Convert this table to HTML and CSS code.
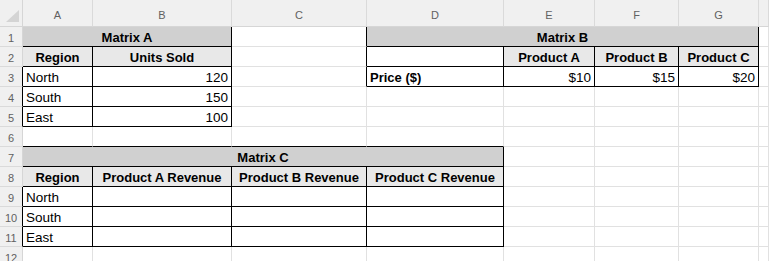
FILE: index.html
```html
<!DOCTYPE html>
<html>
<head>
<meta charset="utf-8">
<link rel="stylesheet" href="styles.css">
</head>
<body>
<div class="sheet">
  <!-- column headers -->
  <div class="c corner"><svg class="tri" width="14" height="12" viewBox="0 0 14 12"><polygon points="13,0 13,12 0,12" fill="#d4d4d4"/></svg></div>
  <div class="c hd">A</div>
  <div class="c hd">B</div>
  <div class="c hd">C</div>
  <div class="c hd">D</div>
  <div class="c hd">E</div>
  <div class="c hd">F</div>
  <div class="c hd">G</div>
  <div class="c hd"></div>

  <!-- row 1 -->
  <div class="c rh">1</div>
  <div class="c ttl span2 bR bB">Matrix A</div>
  <div class="c bR"></div>
  <div class="c ttl span4 bR bB">Matrix B</div>
  <div class="c"></div>

  <!-- row 2 -->
  <div class="c rh">2</div>
  <div class="c th bR bB">Region</div>
  <div class="c th bR bB">Units Sold</div>
  <div class="c bR"></div>
  <div class="c bR bB"></div>
  <div class="c th bR bB">Product A</div>
  <div class="c th bR bB">Product B</div>
  <div class="c th bR bB">Product C</div>
  <div class="c"></div>

  <!-- row 3 -->
  <div class="c rh bR">3</div>
  <div class="c bR bB">North</div>
  <div class="c num bR bB">120</div>
  <div class="c bR"></div>
  <div class="c b bR bB">Price ($)</div>
  <div class="c num bR bB">$10</div>
  <div class="c num bR bB">$15</div>
  <div class="c num bR bB">$20</div>
  <div class="c"></div>

  <!-- row 4 -->
  <div class="c rh bR">4</div>
  <div class="c bR bB">South</div>
  <div class="c num bR bB">150</div>
  <div class="c"></div>
  <div class="c"></div>
  <div class="c"></div>
  <div class="c"></div>
  <div class="c"></div>
  <div class="c"></div>

  <!-- row 5 -->
  <div class="c rh bR">5</div>
  <div class="c bR bB">East</div>
  <div class="c num bR bB">100</div>
  <div class="c"></div>
  <div class="c"></div>
  <div class="c"></div>
  <div class="c"></div>
  <div class="c"></div>
  <div class="c"></div>

  <!-- row 6 -->
  <div class="c rh">6</div>
  <div class="c bB"></div>
  <div class="c bB"></div>
  <div class="c bB"></div>
  <div class="c bB"></div>
  <div class="c"></div>
  <div class="c"></div>
  <div class="c"></div>
  <div class="c"></div>

  <!-- row 7 -->
  <div class="c rh">7</div>
  <div class="c ttl span4 bR bB">Matrix C</div>
  <div class="c"></div>
  <div class="c"></div>
  <div class="c"></div>
  <div class="c"></div>

  <!-- row 8 -->
  <div class="c rh">8</div>
  <div class="c th bR bB">Region</div>
  <div class="c th bR bB">Product A Revenue</div>
  <div class="c th bR bB">Product B Revenue</div>
  <div class="c th bR bB">Product C Revenue</div>
  <div class="c"></div>
  <div class="c"></div>
  <div class="c"></div>
  <div class="c"></div>

  <!-- row 9 -->
  <div class="c rh bR">9</div>
  <div class="c bR bB">North</div>
  <div class="c bR bB"></div>
  <div class="c bR bB"></div>
  <div class="c bR bB"></div>
  <div class="c"></div>
  <div class="c"></div>
  <div class="c"></div>
  <div class="c"></div>

  <!-- row 10 -->
  <div class="c rh bR">10</div>
  <div class="c bR bB">South</div>
  <div class="c bR bB"></div>
  <div class="c bR bB"></div>
  <div class="c bR bB"></div>
  <div class="c"></div>
  <div class="c"></div>
  <div class="c"></div>
  <div class="c"></div>

  <!-- row 11 -->
  <div class="c rh bR">11</div>
  <div class="c bR bB">East</div>
  <div class="c bR bB"></div>
  <div class="c bR bB"></div>
  <div class="c bR bB"></div>
  <div class="c"></div>
  <div class="c"></div>
  <div class="c"></div>
  <div class="c"></div>

  <!-- row 12 -->
  <div class="c rh">12</div>
  <div class="c"></div>
  <div class="c"></div>
  <div class="c"></div>
  <div class="c"></div>
  <div class="c"></div>
  <div class="c"></div>
  <div class="c"></div>
  <div class="c"></div>
</div>
</body>
</html>
```

FILE: styles.css
```css
html, body {
  margin: 0;
  padding: 0;
  background: #ffffff;
  overflow: hidden;
}

.sheet {
  display: grid;
  grid-template-columns: 23px 70px 139px 135px 137px 91px 84px 80px 1fr;
  grid-template-rows: 27px repeat(12, 20px);
  width: 769px;
  height: 261px;
  overflow: hidden;
  font-family: "Liberation Sans", Arial, sans-serif;
  font-size: 13.5px;
  color: #000000;
}

.c {
  box-sizing: border-box;
  border-right: 1px solid #e1e1e1;
  border-bottom: 1px solid #e1e1e1;
  display: flex;
  align-items: flex-end;
  justify-content: flex-start;
  line-height: 16px;
  padding: 0 3px;
  white-space: nowrap;
  overflow: hidden;
}

.corner {
  background: #f0f0f0;
  border-right-color: #d6d6d6;
  border-bottom-color: #d6d6d6;
  padding: 0 2px 4px 0;
  justify-content: flex-end;
}

.tri {
  display: block;
}

.hd {
  background: #f0f0f0;
  color: #616161;
  font-size: 11px;
  justify-content: center;
  padding: 0 0 3px 0;
  border-right-color: #dadada;
  border-bottom-color: #d6d6d6;
}

.rh {
  background: #f0f0f0;
  color: #616161;
  font-size: 11px;
  justify-content: center;
  padding: 0;
  border-bottom-color: #dadada;
  border-right-color: #d6d6d6;
}

.span2 {
  grid-column: span 2;
}

.span4 {
  grid-column: span 4;
}

.ttl {
  background: #d0d0d0;
  font-weight: bold;
  font-size: 13px;
  justify-content: center;
}

.th {
  background: #e8e8e8;
  font-weight: bold;
  font-size: 13px;
  justify-content: center;
}

.b {
  font-weight: bold;
  font-size: 13px;
}

.num {
  justify-content: flex-end;
}

.bR {
  border-right-color: #000000;
}

.bB {
  border-bottom-color: #000000;
}
```
